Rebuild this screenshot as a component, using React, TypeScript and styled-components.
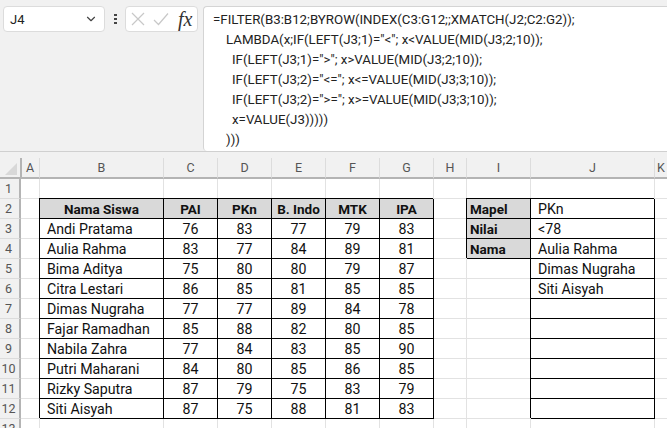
import React from 'react'
import styled, { createGlobalStyle } from 'styled-components'
import { ChevronDown } from 'lucide-react'

const GlobalStyle = createGlobalStyle`
  html, body { margin: 0; padding: 0; background: #fff; }
  body { font-family: Roboto, "Liberation Sans", sans-serif; overflow: hidden; }
`

const Page = styled.div`
  width: 667px;
  height: 428px;
  overflow: hidden;
  background: #f1f1f1;
`

const TopBar = styled.div`
  display: flex;
  align-items: flex-start;
  height: 152px;
  padding: 6px 0 0 3px;
  box-sizing: border-box;
  border-bottom: 1px solid #d0d0d0;
`

const NameBox = styled.div`
  width: 102px;
  height: 26px;
  box-sizing: border-box;
  background: #fff;
  border: 1px solid #dcdcdc;
  border-radius: 4px;
  display: flex;
  align-items: center;
  justify-content: space-between;
  padding: 0 6px 0 6px;
  font-size: 13px;
  color: #222;
`

const Dots = styled.div`
  width: 20px;
  display: flex;
  flex-direction: column;
  align-items: center;
  gap: 2px;
  padding-top: 8px;
  span {
    width: 3px;
    height: 2px;
    background: #444;
  }
`

const FxBox = styled.div`
  width: 73px;
  height: 26px;
  box-sizing: border-box;
  background: #fff;
  border: 1px solid #dcdcdc;
  border-radius: 4px;
  display: flex;
  align-items: center;
  gap: 8px;
  padding-left: 5px;
  svg { display: block; }
`

const FxLabel = styled.i`
  font-family: "Liberation Serif", serif;
  font-size: 20px;
  line-height: 24px;
  color: #333;
  margin-left: 1px;
`

const FormulaBox = styled.div`
  flex: 1;
  height: 145px;
  margin-left: 5px;
  box-sizing: border-box;
  background: #fff;
  border: 1px solid #d4d4d4;
  border-right: 0;
  border-bottom: 0;
  border-top-left-radius: 4px;
  border-bottom-left-radius: 4px;
  padding: 3px 0 0 9px;
`

const FormulaLine = styled.div<{ $indent: number }>`
  height: 20px;
  line-height: 20px;
  padding-left: ${p => p.$indent}px;
  font-size: 13.3px;
  color: #222;
  white-space: pre;
`

const Sheet = styled.div`
  display: grid;
  grid-template-columns: 21px 19px 124px 54px 54px 54px 54px 54px 33px 64px 124px 13px;
  grid-template-rows: 27px repeat(13, 20px);
`

const Corner = styled.div`
  border-right: 2px solid #b4b4b4;
  border-bottom: 2px solid #b4b4b4;
  box-sizing: border-box;
  margin-top: 6px;
  margin-right: -1px;
  position: relative;
  &::after {
    content: '';
    position: absolute;
    right: 3px;
    bottom: 2px;
    border-style: solid;
    border-width: 0 0 12px 12px;
    border-color: transparent transparent #d8d8d8 transparent;
  }
`

const ColHead = styled.div`
  margin-top: 6px;
  box-sizing: border-box;
  border-right: 1px solid #dcdcdc;
  border-bottom: 2px solid #b4b4b4;
  display: flex;
  align-items: center;
  justify-content: center;
  font-size: 12.5px;
  color: #555;
`

const RowHead = styled.div`
  box-sizing: border-box;
  border-right: 2px solid #b4b4b4;
  border-bottom: 1px solid #dcdcdc;
  display: flex;
  align-items: center;
  justify-content: center;
  padding-right: 2px;
  font-size: 12.5px;
  color: #555;
`

const Cell = styled.div<{ $boxed?: boolean; $head?: boolean; $align?: string; $pad?: number }>`
  box-sizing: border-box;
  background: ${p => (p.$head ? '#d9d9d9' : '#fff')};
  border-right: 1px solid ${p => (p.$boxed ? '#000' : '#e2e2e2')};
  border-bottom: 1px solid ${p => (p.$boxed ? '#000' : '#e2e2e2')};
  box-shadow: ${p => (p.$boxed ? '-1px -1px 0 #000' : 'none')};
  display: flex;
  align-items: center;
  justify-content: ${p => p.$align ?? 'flex-start'};
  padding-left: ${p => p.$pad ?? 0}px;
  font-size: ${p => (p.$head ? 13.5 : 14.2)}px;
  font-weight: ${p => (p.$head ? 700 : 400)};
  color: #111;
  white-space: nowrap;
`

const columns = ['A', 'B', 'C', 'D', 'E', 'F', 'G', 'H', 'I', 'J', 'K']

const subjects = ['PAI', 'PKn', 'B. Indo', 'MTK', 'IPA']

const students: [string, number, number, number, number, number][] = [
  ['Andi Pratama', 76, 83, 77, 79, 83],
  ['Aulia Rahma', 83, 77, 84, 89, 81],
  ['Bima Aditya', 75, 80, 80, 79, 87],
  ['Citra Lestari', 86, 85, 81, 85, 85],
  ['Dimas Nugraha', 77, 77, 89, 84, 78],
  ['Fajar Ramadhan', 85, 88, 82, 80, 85],
  ['Nabila Zahra', 77, 84, 83, 85, 90],
  ['Putri Maharani', 84, 80, 85, 86, 85],
  ['Rizky Saputra', 87, 79, 75, 83, 79],
  ['Siti Aisyah', 87, 75, 88, 81, 83],
]

const formula = [
  { indent: 0, text: '=FILTER(B3:B12;BYROW(INDEX(C3:G12;;XMATCH(J2;C2:G2));' },
  { indent: 13, text: 'LAMBDA(x;IF(LEFT(J3;1)="<"; x<VALUE(MID(J3;2;10));' },
  { indent: 19, text: 'IF(LEFT(J3;1)=">"; x>VALUE(MID(J3;2;10));' },
  { indent: 19, text: 'IF(LEFT(J3;2)="<="; x<=VALUE(MID(J3;3;10));' },
  { indent: 19, text: 'IF(LEFT(J3;2)=">="; x>=VALUE(MID(J3;3;10));' },
  { indent: 19, text: 'x=VALUE(J3)))))' },
  { indent: 13, text: ')))' },
]

// lookup panel, columns I and J, indexed from sheet row 2
const panelLabels = ['Mapel', 'Nilai', 'Nama']
const panelValues = ['PKn', '<78', 'Aulia Rahma', 'Dimas Nugraha', 'Siti Aisyah', '', '', '', '', '', '']

function SheetRow({ row }: { row: number }) {
  const idx = row - 2
  const inTable = row >= 2 && row <= 12
  const student = row >= 3 && row <= 12 ? students[row - 3] : null
  const label = panelLabels[idx]
  const value = panelValues[idx]

  return (
    <>
      <RowHead>{row}</RowHead>
      <Cell />
      {row === 2 ? (
        <Cell $boxed $head $align="center">Nama Siswa</Cell>
      ) : student ? (
        <Cell $boxed $pad={7}>{student[0]}</Cell>
      ) : (
        <Cell />
      )}
      {[0, 1, 2, 3, 4].map(i =>
        row === 2 ? (
          <Cell key={i} $boxed $head $align="center">{subjects[i]}</Cell>
        ) : student ? (
          <Cell key={i} $boxed $align="center">{student[i + 1]}</Cell>
        ) : (
          <Cell key={i} />
        )
      )}
      <Cell />
      {label ? <Cell $boxed $head $pad={3}>{label}</Cell> : <Cell />}
      {inTable ? <Cell $boxed $pad={7}>{value}</Cell> : <Cell />}
      <Cell />
    </>
  )
}

function App() {
  const rows = [1, 2, 3, 4, 5, 6, 7, 8, 9, 10, 11, 12, 13]
  return (
    <Page>
      <GlobalStyle />
      <TopBar>
        <NameBox>
          J4
          <ChevronDown size={14} color="#444" />
        </NameBox>
        <Dots><span /><span /><span /></Dots>
        <FxBox>
          <svg width="14" height="14" viewBox="0 0 14 14" fill="none" stroke="#c8c8c8" strokeWidth="1.2">
            <path d="M1 1L13 13M13 1L1 13" />
          </svg>
          <svg width="16" height="14" viewBox="0 0 16 14" fill="none" stroke="#c8c8c8" strokeWidth="1.2">
            <path d="M1 8L5.5 12.5L15 1.5" />
          </svg>
          <FxLabel>fx</FxLabel>
        </FxBox>
        <FormulaBox>
          {formula.map((line, i) => (
            <FormulaLine key={i} $indent={line.indent}>{line.text}</FormulaLine>
          ))}
        </FormulaBox>
      </TopBar>
      <Sheet>
        <Corner />
        {columns.map(c => <ColHead key={c}>{c}</ColHead>)}
        {rows.map(r => <SheetRow key={r} row={r} />)}
      </Sheet>
    </Page>
  )
}

export default App
